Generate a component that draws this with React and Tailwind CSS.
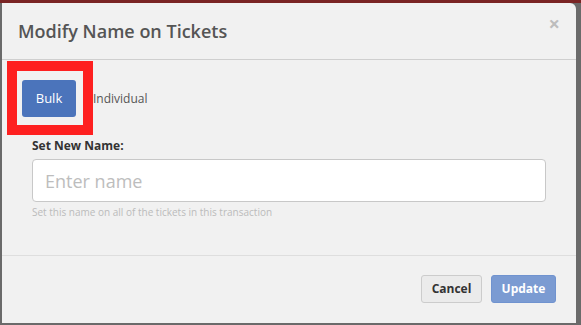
export default function App() {
  return (
    <div className="w-[581px] h-[325px] bg-[#6a6a6a] flex flex-col overflow-hidden" style={{ fontFamily: '"Open Sans", "Liberation Sans", sans-serif' }}>
      <div className="h-[3px] bg-[#7a2424] shrink-0" />
      <div className="flex-1 pl-[2px] pr-[5px] pb-[2px] flex">
        <div className="relative flex-1 bg-[#f1f1f1] rounded-tr-[6px] flex flex-col">
          <div className="h-[57px] shrink-0 border-b border-[#cfcfcf] flex items-start justify-between pl-[16px] pr-[16px]">
            <h1 className="pt-[16px] text-[18px] leading-[24px] font-semibold text-[#555]">Modify Name on Tickets</h1>
            <span className="pt-[11px] text-[20px] leading-[20px] font-bold text-[#bdbdbd]">×</span>
          </div>
          <div className="flex-1 flex flex-col">
            <div className="mt-[20px] pl-[20px] flex items-center h-[37px]">
              <button className="w-[54px] h-[37px] rounded-[3px] bg-[#4b74bb] text-white text-[13px]">Bulk</button>
              <span className="ml-[17px] text-[12px] text-[#555]">Individual</span>
            </div>
            <div className="px-[30px] mt-[21px] flex flex-col">
              <label className="text-[12px] leading-[16px] font-bold text-[#333]">Set New Name:</label>
              <input
                className="mt-[5px] h-[43px] w-full bg-white border border-[#c8c8c8] rounded-[4px] px-[12px] text-[18px] text-[#555] placeholder:text-[#bdbdbd] outline-none"
                placeholder="Enter name"
              />
              <p className="mt-[3px] text-[10px] leading-[14px] text-[#bbb]">Set this name on all of the tickets in this transaction</p>
            </div>
          </div>
          <div className="h-[68px] shrink-0 border-t border-[#dedede] flex items-start justify-end gap-[9px] pt-[19px] pr-[20px]">
            <button className="w-[61px] h-[28px] rounded-[3px] bg-[#ebebeb] border border-[#cccccc] text-[12px] font-bold text-[#333]">Cancel</button>
            <button className="w-[65px] h-[28px] rounded-[3px] bg-[#7b9bd2] border border-[#7093cf] text-[12px] font-bold text-white">Update</button>
          </div>
          <div className="absolute left-[5px] top-[58px] w-[86px] h-[74px] border-[10px] border-[#fe2020] pointer-events-none" />
        </div>
      </div>
    </div>
  );
}
